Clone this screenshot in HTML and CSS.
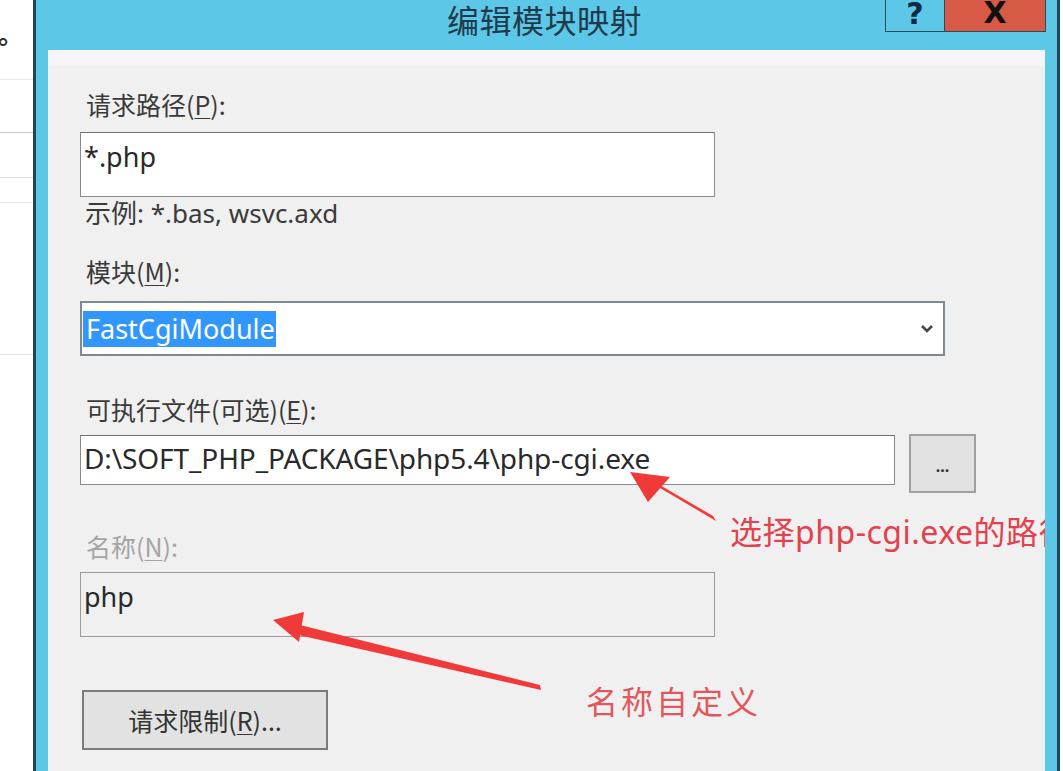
FILE: index.html
```html
<!DOCTYPE html>
<html lang="zh-CN">
<head>
<meta charset="utf-8">
<title>编辑模块映射</title>
<link rel="stylesheet" href="styles.css">
</head>
<body>
<div class="page">
  <aside class="behind">
    <div class="bh-row r1"><span class="bh-text">i。</span></div>
    <div class="bh-row r2"></div>
    <div class="bh-row r3"></div>
    <div class="bh-row r4"></div>
    <div class="bh-row r5"></div>
  </aside>
  <section class="dialog">
    <header class="titlebar">
      <h1 class="title">编辑模块映射</h1>
      <div class="winbtns">
        <span class="wbtn help">?</span>
        <span class="wbtn close">X</span>
      </div>
    </header>
    <div class="content">
      <label class="lbl">请求路径(<u>P</u>):</label>
      <div class="field tall">*.php</div>
      <div class="hint">示例: *.bas, wsvc.axd</div>
      <label class="lbl l2">模块(<u>M</u>):</label>
      <div class="select">
        <span class="sel-text">FastCgiModule</span>
        <svg class="chev" width="14" height="10" viewBox="0 0 14 10"><path d="M2 2 L7 7 L12 2" fill="none" stroke="#444" stroke-width="2.6"/></svg>
      </div>
      <label class="lbl l3">可执行文件(可选)(<u>E</u>):</label>
      <div class="row">
        <div class="field exe">D:\SOFT_PHP_PACKAGE\php5.4\php-cgi.exe</div>
        <span class="btn dots">...</span>
      </div>
      <label class="lbl l4 disabled">名称(<u>N</u>):</label>
      <div class="field tall off">php</div>
      <span class="btn limit">请求限制(<u>R</u>)...</span>

      <svg class="arrows" width="997" height="721" viewBox="0 0 997 721">
        <polygon points="665,466 668,471 612,438 610,434" fill="#f03a3a"/>
        <polygon points="582,422 622,427 600,452" fill="#f03a3a"/>
        <polygon points="492,635 493,640 246,584 248,574" fill="#f03a3a"/>
        <polygon points="225,570 256,562 251,592" fill="#f03a3a"/>
      </svg>
      <span class="note n1">选择php-cgi.exe的路径</span>
      <span class="note n2">名称自定义</span>
    </div>
  </section>
</div>
</body>
</html>
```
FILE: styles.css
```css
* { box-sizing: border-box; }
html, body { margin: 0; padding: 0; }
body {
  width: 1063px;
  height: 771px;
  overflow: hidden;
  background: #ffffff;
  font-family: "Noto Sans", "Noto Sans CJK SC", sans-serif;
  color: #333;
}
.page {
  display: flex;
  height: 771px;
}
.behind {
  width: 33px;
  flex: none;
  display: flex;
  flex-direction: column;
  background: #fff;
  overflow: hidden;
}
.bh-row { border-bottom: 1px solid #d4d4d4; }
.r1 { height: 80px; border-bottom-color: #eaeaea; padding-top: 14px; }
.r2 { height: 53px; border-bottom-color: #c8c8c8; }
.r3 { height: 45px; border-bottom-color: #dedede; }
.r4 { height: 25px; border-bottom-color: #ececec; }
.r5 { height: 152px; border-bottom-color: #e4e4e4; }
.bh-text {
  display: block;
  margin-left: -10px;
  font-size: 26px;
  font-weight: bold;
  color: #333;
  font-family: "Noto Sans CJK SC", sans-serif;
}
.dialog {
  width: 1027px;
  flex: none;
  display: flex;
  flex-direction: column;
  background: #5dc7e7;
  border-left: 3px solid #1f4556;
  border-right: 3px solid #1f4556;
  padding: 0 12px;
}
.titlebar {
  position: relative;
  height: 50px;
  flex: none;
  display: flex;
  justify-content: center;
}
.title {
  margin: 0;
  font-family: "Noto Sans CJK SC", sans-serif;
  font-weight: 400;
  font-size: 32px;
  line-height: 38px;
  color: #1d3b4b;
  letter-spacing: 0.5px;
  padding-right: 4px;
}
.winbtns {
  position: absolute;
  top: 0;
  right: -1px;
  display: flex;
}
.wbtn {
  height: 32px;
  display: flex;
  align-items: center;
  justify-content: center;
  font-family: "DejaVu Sans", sans-serif;
  font-weight: bold;
  border: 1px solid #2c4a5a;
  border-top: none;
}
.help {
  width: 60px;
  background: #5dc7e7;
  color: #0f2a45;
  font-size: 30px;
  line-height: 1;
  padding-bottom: 4px;
}
.close {
  width: 101px;
  background: #d65a45;
  color: #111;
  font-size: 30px;
  border-left: none;
  padding-bottom: 6px;
}
.content {
  position: relative;
  flex: 1;
  overflow: hidden;
  background: linear-gradient(#f5f5f9 0, #f5f5f9 16px, #f0f0f0 16px);
  padding: 40px 0 0 32px;
  display: flex;
  flex-direction: column;
  align-items: flex-start;
}
.lbl {
  display: block;
  font-family: "Noto Sans CJK SC", sans-serif;
  font-size: 25px;
  line-height: 28px;
  height: 28px;
  color: #3a3a3a;
  padding-left: 6px;
}
.hint {
  display: block;
  font-size: 26px;
  line-height: 30px;
  height: 30px;
  color: #3a3a3a;
  padding-left: 5px;
  margin-top: 1px;
}
.lbl u, .btn u { text-underline-offset: 3px; text-decoration-thickness: 1px; }
.l2 { margin-top: 29px; }
.l3 { margin-top: 39px; }
.l4 { margin-top: 39px; }
.disabled { color: #a4a4a4; }
.field {
  background: #fff;
  border: 1px solid #8a8a8a;
  border-top-color: #6f6f6f;
  font-size: 27px;
  color: #2a2a2a;
  padding-left: 3px;
}
.tall {
  width: 635px;
  height: 65px;
  margin-top: 14px;
  padding-top: 6px;
  line-height: 36px;
}
.off {
  margin-top: 12px;
  background: #f0f0f0;
  border-color: #9a9a9a;
}
.select {
  margin-top: 16px;
  width: 865px;
  height: 55px;
  background: #fff;
  border: 2px solid #7d8a95;
  display: flex;
  align-items: center;
  justify-content: space-between;
  padding: 0 9px 0 1px;
}
.sel-text {
  background: #3297fd;
  color: #fff;
  font-size: 27px;
  line-height: 36px;
  height: 36px;
  padding: 0 1px 0 3px;
}
.chev { margin-top: 1px; }
.row {
  margin-top: 11px;
  display: flex;
  align-items: flex-start;
  gap: 14px;
}
.exe {
  width: 815px;
  height: 50px;
  margin-top: 1px;
  font-size: 28px;
  line-height: 44px;
  letter-spacing: -0.1px;
  white-space: nowrap;
  overflow: hidden;
}
.btn {
  display: flex;
  align-items: center;
  justify-content: center;
  background: #e1e1e1;
  border: 2px solid #a0a0a0;
  color: #333;
}
.dots {
  width: 67px;
  height: 59px;
  font-size: 16px;
  font-weight: bold;
  padding-top: 4px;
}
.limit {
  margin-top: 53px;
  margin-left: 2px;
  width: 246px;
  height: 60px;
  font-family: "Noto Sans CJK SC", sans-serif;
  font-size: 25px;
  border-color: #7c7c7c;
  background: #e2e2e2;
}
.arrows {
  position: absolute;
  left: 0;
  top: 0;
  pointer-events: none;
}
.note {
  position: absolute;
  font-family: "Noto Sans", "Noto Sans CJK SC", sans-serif;
  font-size: 32px;
  line-height: 38px;
  white-space: nowrap;
}
.n1 { left: 682px; top: 463px; color: #e2414d; letter-spacing: 0.5px; }
.n2 { left: 538px; top: 633px; color: #e0585e; letter-spacing: 3px; }
```
